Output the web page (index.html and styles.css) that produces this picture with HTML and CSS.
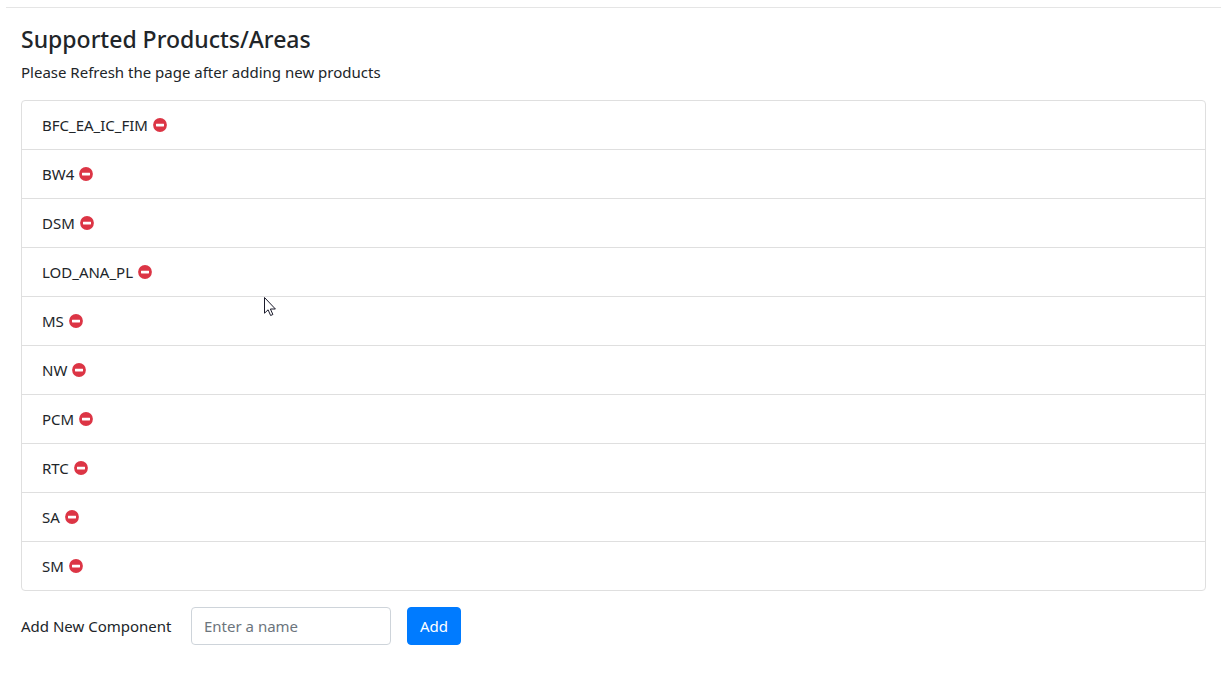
FILE: index.html
```html
<!DOCTYPE html>
<html lang="en">
<head>
<meta charset="utf-8">
<title>Supported Products</title>
<link rel="stylesheet" href="styles.css">
</head>
<body>
<svg class="defs" aria-hidden="true"><symbol id="minus" viewBox="0 0 14 14"><circle cx="7" cy="7" r="6.900"/><rect class="bar" x="3" y="5.700" width="8" height="2.700" rx=".4"/></symbol></svg>
<main class="page">
<h1 class="title">Supported Products/Areas</h1>
<p class="hint">Please Refresh the page after adding new products</p>
<ul class="list">
<li class="item">BFC_EA_IC_FIM <button class="remove" type="button" aria-label="Remove BFC_EA_IC_FIM"><svg class="icon"><use href="#minus"/></svg></button></li>
<li class="item">BW4 <button class="remove" type="button" aria-label="Remove BW4"><svg class="icon"><use href="#minus"/></svg></button></li>
<li class="item">DSM <button class="remove" type="button" aria-label="Remove DSM"><svg class="icon"><use href="#minus"/></svg></button></li>
<li class="item">LOD_ANA_PL <button class="remove" type="button" aria-label="Remove LOD_ANA_PL"><svg class="icon"><use href="#minus"/></svg></button></li>
<li class="item">MS <button class="remove" type="button" aria-label="Remove MS"><svg class="icon"><use href="#minus"/></svg></button></li>
<li class="item">NW <button class="remove" type="button" aria-label="Remove NW"><svg class="icon"><use href="#minus"/></svg></button></li>
<li class="item">PCM <button class="remove" type="button" aria-label="Remove PCM"><svg class="icon"><use href="#minus"/></svg></button></li>
<li class="item">RTC <button class="remove" type="button" aria-label="Remove RTC"><svg class="icon"><use href="#minus"/></svg></button></li>
<li class="item">SA <button class="remove" type="button" aria-label="Remove SA"><svg class="icon"><use href="#minus"/></svg></button></li>
<li class="item">SM <button class="remove" type="button" aria-label="Remove SM"><svg class="icon"><use href="#minus"/></svg></button></li>
</ul>
<form class="form">
<label class="label" for="name">Add New Component</label>
<input class="field" id="name" type="text" placeholder="Enter a name">
<button class="add" type="button">Add</button>
</form>
</main>
<svg class="cursor" viewBox="0 0 12 20" aria-hidden="true"><path d="M.5 .5v15.700l3.600-3.400 2.500 5.700 2.300-1-2.500-5.500h5z"/></svg>
</body>
</html>
```
FILE: styles.css
```css
* { box-sizing: border-box; }
body {
  margin: 0;
  background: #fff;
  color: #212529;
  font: 400 15px/24px "Segoe UI", "Noto Sans", "Open Sans", sans-serif;
}
.defs { position: absolute; width: 0; height: 0; }
.page {
  margin: 7px 2px 0 6px;
  padding: 17px 15px 0;
  border-top: 1px solid #e5e5e5;
}
.title {
  margin: 0 0 7px;
  font-size: 23px;
  line-height: 28px;
  font-weight: 500;
}
.hint { margin: 0 0 16px; }
.list {
  margin: 0 0 16px;
  padding: 0;
  list-style: none;
  border: 1px solid #dfdfdf;
  border-radius: 4px;
}
.item {
  display: flex;
  align-items: center;
  gap: 5px;
  padding: 12px 20px;
}
.item + .item { border-top: 1px solid #dfdfdf; }
.remove {
  padding: 0;
  border: 0;
  background: none;
  color: #dc3545;
}
.icon { display: block; width: 14px; height: 14px; fill: currentColor; }
.bar { fill: #fff; }
.form { display: flex; align-items: center; gap: 16px; }
.label { min-width: 154px; }
.field {
  width: 200px;
  height: 38px;
  padding: 6px 12px;
  border: 1px solid #ced4da;
  border-radius: 4px;
  background: #fff;
  color: #495057;
  font: inherit;
}
.field::placeholder { color: #6c757d; opacity: 1; }
.add {
  height: 38px;
  padding: 6px 12px;
  border: 1px solid #007bff;
  border-radius: 4px;
  background: #007bff;
  color: #fff;
  font: inherit;
}
.cursor {
  position: absolute;
  left: 264px;
  top: 297px;
  width: 12px;
  height: 20px;
  fill: #fff;
  stroke: #1a1a2a;
  overflow: visible;
}
```
